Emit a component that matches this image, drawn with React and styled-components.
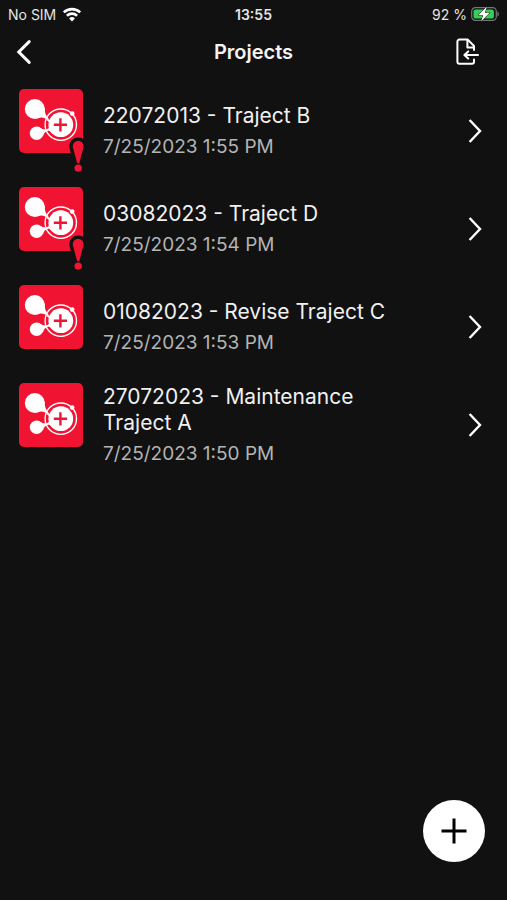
import React from 'react';
import styled, { createGlobalStyle } from 'styled-components';

const projects = [
  { id: 1, name: '22072013 - Traject B', date: '7/25/2023 1:55 PM', alert: true },
  { id: 2, name: '03082023 - Traject D', date: '7/25/2023 1:54 PM', alert: true },
  { id: 3, name: '01082023 - Revise Traject C', date: '7/25/2023 1:53 PM', alert: false },
  { id: 4, name: '27072023 - Maintenance Traject A', date: '7/25/2023 1:50 PM', alert: false },
];

function WifiIcon() {
  return (
    <svg width="20" height="15" viewBox="0 0 20 15" fill="none" stroke="#fff" strokeWidth="2.6">
      <path d="M1.8 5.4a11.8 11.8 0 0 1 16.4 0" />
      <path d="M4.9 8.7a7.4 7.4 0 0 1 10.2 0" />
      <path d="M10 14.4l-2.9-3a4.2 4.2 0 0 1 5.8 0z" fill="#fff" stroke="none" />
    </svg>
  );
}

function BatteryIcon() {
  return (
    <svg width="28" height="16" viewBox="0 0 28 16">
      <rect x="0.7" y="1.6" width="24.6" height="12.8" rx="3.8" fill="none" stroke="#77777a" strokeWidth="1.2" />
      <path d="M26.4 5.4c2 1 2 4.2 0 5.2z" fill="#77777a" />
      <rect x="2.5" y="3.4" width="20.4" height="9.2" rx="2.2" fill="#34d058" />
      <path
        d="M16 0.6L7.2 9.2h5l-2.2 6.4 8.8-8.8h-5z"
        fill="#fff"
        stroke="#111"
        strokeWidth="1"
        paintOrder="stroke"
      />
    </svg>
  );
}

function BackIcon() {
  return (
    <svg width="16" height="26" viewBox="0 0 16 26" fill="none" stroke="#fff" strokeWidth="3">
      <path d="M13.2 2.6L2.8 13l10.4 10.4" strokeLinecap="round" strokeLinejoin="miter" />
    </svg>
  );
}

function ImportIcon() {
  return (
    <svg
      width="24"
      height="28"
      viewBox="0 0 24 28"
      fill="none"
      stroke="#fff"
      strokeWidth="2"
      strokeLinecap="round"
      strokeLinejoin="round"
    >
      <path d="M18 21.5v2.2a2 2 0 0 1-2 2H3.4a2 2 0 0 1-2-2V3.6a2 2 0 0 1 2-2h8.4L18 8v4" />
      <path d="M11.4 2v7.4H18" />
      <path d="M22 17H8.6M12.2 13.4L8.4 17l3.8 3.6" />
    </svg>
  );
}

function ChevronIcon() {
  return (
    <svg width="16" height="26" viewBox="0 0 16 26" fill="none" stroke="#fff" strokeWidth="2.4">
      <path d="M2.6 2L13 13 2.6 24" />
    </svg>
  );
}

function PlusIcon() {
  return (
    <svg width="26" height="26" viewBox="0 0 26 26" stroke="#000" strokeWidth="3">
      <path d="M13 0.5v25M0.5 13h25" />
    </svg>
  );
}

function ProjectIcon({ alert }) {
  return (
    <svg width="68" height="84" viewBox="0 0 68 84">
      <rect width="64" height="64" rx="5" fill="#f01432" />
      <circle cx="41.8" cy="35.7" r="15.7" fill="none" stroke="#fff" strokeWidth="1.4" />
      <g fill="#fff">
        <circle cx="15.8" cy="20" r="10" />
        <path d="M25.6 18c-.2 5 1 8.8 4.400 12.2l-1 1c-4-3.200-7.200-3.600-11.400-1.400z" />
        <circle cx="17.6" cy="44.3" r="6.8" />
        <path d="M19.4 37.7c3 2.4 5.6 3 9.6 2.4l.4 1.600c-3.400.8-4.800 2.800-5.200 5.200z" />
        <circle cx="41.8" cy="35.7" r="12.4" />
        <path d="M28.4 30.2c3 1.6 4.8.6 7-2.200l-3 16c-1-2-2-2.600-4.200-2.400l.2-1.600c1.600-.8 2.400-2 2.400-4s-.8-3.600-2.800-4.600z" />
        <circle cx="53.2" cy="24.6" r="2.3" />
      </g>
      <path d="M41.4 29.200v13.2M34.8 35.800h13.2" stroke="#f01432" strokeWidth="2.4" />
      {alert && (
        <g fill="#f01432" stroke="#111" strokeWidth="7" paintOrder="stroke">
          <circle cx="59.2" cy="79" r="3.6" />
          <path d="M59.2 52c-3.6 0-5.700 2.600-5.300 6.200l4.300 16h2l4.300-16c.4-3.600-1.700-6.200-5.300-6.200z" />
          <circle cx="59.2" cy="79" r="3.6" stroke="none" />
        </g>
      )}
    </svg>
  );
}

function ProjectRow({ project }) {
  return (
    <li>
      <RowLink href="#">
        <ProjectIcon alert={project.alert} />
        <RowText>
          <RowTitle>{project.name}</RowTitle>
          <RowDate>{project.date}</RowDate>
        </RowText>
        <ChevronIcon />
      </RowLink>
    </li>
  );
}

function App() {
  return (
    <Page>
      <GlobalStyle />
      <StatusBar>
        <StatusGroup>
          No SIM
          <WifiIcon />
        </StatusGroup>
        <Clock>13:55</Clock>
        <StatusGroup $end>
          92 %
          <BatteryIcon />
        </StatusGroup>
      </StatusBar>
      <Header>
        <IconButton aria-label="Back"><BackIcon /></IconButton>
        <h1>Projects</h1>
        <IconButton aria-label="Import project" $end><ImportIcon /></IconButton>
      </Header>
      <ProjectList>
        {projects.map((project) => (
          <ProjectRow key={project.id} project={project} />
        ))}
      </ProjectList>
      <AddButton aria-label="Add project"><PlusIcon /></AddButton>
    </Page>
  );
}

const GlobalStyle = createGlobalStyle`
* {
  box-sizing: border-box;
}

body {
  margin: 0;
  background: #111;
  color: #fff;
  font-family: Inter, "Liberation Sans", sans-serif;
}

svg {
  display: block;
  flex-shrink: 0;
}
`;

const Page = styled.div`
min-height: 100vh;
`;

const StatusBar = styled.div`
display: grid;
grid-template-columns: 1fr auto 1fr;
align-items: center;
height: 28px;
padding: 0 8px;
font-size: 14px;
color: #e4e4e4;
`;

const StatusGroup = styled.div`
display: flex;
align-items: center;
gap: ${(props) => (props.$end ? '4px' : '6px')};
justify-content: ${(props) => (props.$end ? 'flex-end' : 'flex-start')};
`;

const Clock = styled.span`
font-weight: 600;
`;

const Header = styled.header`
display: grid;
grid-template-columns: 1fr auto 1fr;
align-items: center;
height: 48px;
padding: 0 16px;

h1 {
  margin: 0;
  font-size: 20px;
  font-weight: 600;
  color: #f4f4f4;
}
`;

const IconButton = styled.button`
justify-self: ${(props) => (props.$end ? 'end' : 'start')};
padding: ${(props) => (props.$end ? '0 11px 0 0' : '0')};
border: none;
background: none;
cursor: pointer;
`;

const ProjectList = styled.ul`
margin: 0;
padding: 6px 0 0;
list-style: none;
`;

const RowLink = styled.a`
display: flex;
align-items: center;
min-height: 98px;
padding: 0 24px 0 19px;
color: inherit;
text-decoration: none;
`;

const RowText = styled.div`
flex: 1;
min-width: 0;
padding: 0 56px 0 16px;
line-height: 26px;
`;

const RowTitle = styled.div`
font-size: 21px;
color: #f0f0f0;
`;

const RowDate = styled.div`
margin-top: 5px;
font-size: 19px;
color: #b4b4b4;
`;

const AddButton = styled.button`
position: fixed;
right: 22px;
bottom: 38px;
display: flex;
align-items: center;
justify-content: center;
width: 62px;
height: 62px;
padding: 0;
border: none;
border-radius: 50%;
background: #fff;
cursor: pointer;
`;

export default App;
